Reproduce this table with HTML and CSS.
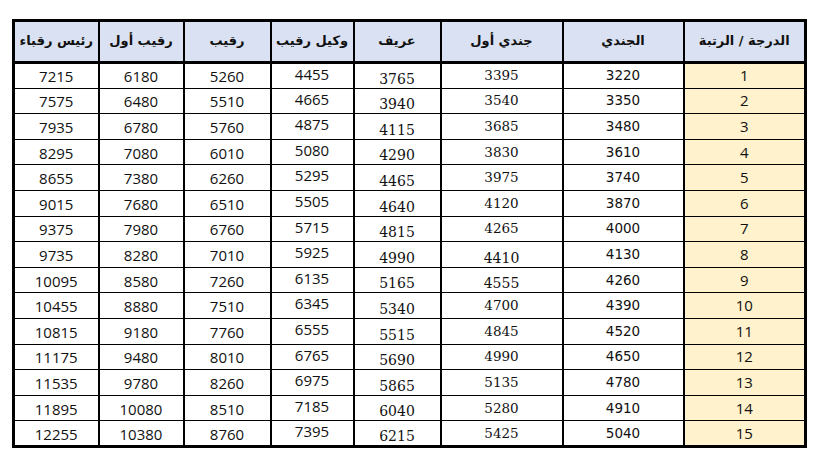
FILE: index.html
```html
<!DOCTYPE html>
<html lang="ar">
<head>
<meta charset="utf-8">
<link rel="stylesheet" href="styles.css">
</head>
<body>
<div class="page">
<table class="grid">
<colgroup>
<col class="c-wide"><col class="c-mid"><col class="c-wide2"><col class="c-n1"><col class="c-n2"><col class="c-n3"><col class="c-n4"><col class="c-n5">
</colgroup>
<thead>
<tr>
<th>الدرجة / الرتبة</th><th>الجندي</th><th>جندي أول</th><th>عريف</th><th>وكيل رقيب</th><th>رقيب</th><th>رقيب أول</th><th>رئيس رقباء</th>
</tr>
</thead>
<tbody>
<tr><td class="rank">1</td><td class="tah">3220</td><td class="a">3395</td><td class="low">3765</td><td class="high">4455</td><td class="b">5260</td><td class="b">6180</td><td class="b">7215</td></tr>
<tr><td class="rank">2</td><td class="tah">3350</td><td class="a">3540</td><td class="low">3940</td><td class="high">4665</td><td class="b">5510</td><td class="b">6480</td><td class="b">7575</td></tr>
<tr><td class="rank">3</td><td class="tah">3480</td><td class="a">3685</td><td class="low">4115</td><td class="high">4875</td><td class="b">5760</td><td class="b">6780</td><td class="b">7935</td></tr>
<tr><td class="rank">4</td><td class="tah">3610</td><td class="a">3830</td><td class="low">4290</td><td class="high">5080</td><td class="b">6010</td><td class="b">7080</td><td class="b">8295</td></tr>
<tr><td class="rank">5</td><td class="tah">3740</td><td class="a">3975</td><td class="low">4465</td><td class="high">5295</td><td class="b">6260</td><td class="b">7380</td><td class="b">8655</td></tr>
<tr><td class="rank">6</td><td class="tah">3870</td><td class="a">4120</td><td class="low">4640</td><td class="high">5505</td><td class="b">6510</td><td class="b">7680</td><td class="b">9015</td></tr>
<tr><td class="rank">7</td><td class="tah">4000</td><td class="a">4265</td><td class="low">4815</td><td class="high">5715</td><td class="b">6760</td><td class="b">7980</td><td class="b">9375</td></tr>
<tr><td class="rank">8</td><td class="tah">4130</td><td class="a low">4410</td><td class="low">4990</td><td class="high">5925</td><td class="b">7010</td><td class="b">8280</td><td class="b">9735</td></tr>
<tr><td class="rank">9</td><td class="tah">4260</td><td class="a low">4555</td><td class="low">5165</td><td class="high">6135</td><td class="b">7260</td><td class="b">8580</td><td class="b">10095</td></tr>
<tr><td class="rank">10</td><td class="tah">4390</td><td class="a">4700</td><td class="low">5340</td><td class="high">6345</td><td class="b">7510</td><td class="b">8880</td><td class="b">10455</td></tr>
<tr><td class="rank">11</td><td class="tah">4520</td><td class="a">4845</td><td class="low">5515</td><td class="high">6555</td><td class="b">7760</td><td class="b">9180</td><td class="b">10815</td></tr>
<tr><td class="rank">12</td><td class="tah">4650</td><td class="a">4990</td><td class="low">5690</td><td class="high">6765</td><td class="b">8010</td><td class="b">9480</td><td class="b">11175</td></tr>
<tr><td class="rank">13</td><td class="tah">4780</td><td class="a">5135</td><td class="low">5865</td><td class="high">6975</td><td class="b">8260</td><td class="b">9780</td><td class="b">11535</td></tr>
<tr><td class="rank">14</td><td class="tah">4910</td><td class="a">5280</td><td class="low">6040</td><td class="high">7185</td><td class="b">8510</td><td class="b">10080</td><td class="b">11895</td></tr>
<tr><td class="rank">15</td><td class="tah">5040</td><td class="a">5425</td><td class="low">6215</td><td class="high">7395</td><td class="b">8760</td><td class="b">10380</td><td class="b">12255</td></tr>
</tbody>
</table>
</div>
</body>
</html>
```
FILE: styles.css
```css
html, body {
  margin: 0;
  padding: 0;
  background: #ffffff;
}
.page {
  width: 820px;
  height: 458px;
  padding: 19px 0 0 12px;
  box-sizing: border-box;
}
.grid {
  direction: rtl;
  border-collapse: collapse;
  table-layout: fixed;
  width: 792px;
  border: 3px solid #000;
  color: #111;
  font-family: "Open Sans", "Liberation Sans", "DejaVu Sans", sans-serif;
}
.c-wide { width: 122px; }
.c-mid { width: 121px; }
.c-wide2 { width: 122px; }
.c-n1 { width: 87px; }
.c-n2 { width: 83px; }
.c-n3 { width: 87px; }
.c-n4 { width: 85px; }
.c-n5 { width: 85px; }
.grid th {
  height: 37px;
  background: #d9e1f2;
  border-left: 2px solid #000;
  border-right: 2px solid #000;
  border-bottom: 3px solid #000;
  font-family: "DejaVu Sans", sans-serif;
  font-weight: bold;
  font-size: 13px;
  color: #111;
  text-align: center;
  vertical-align: middle;
  padding: 0 0 2px;
}
.grid td {
  box-sizing: border-box;
  height: 25.6px;
  border-left: 2px solid #000;
  border-right: 2px solid #000;
  border-bottom: 1px solid #000;
  text-align: center;
  vertical-align: middle;
  font-size: 15px;
  padding: 0;
  line-height: 17px;
}
.grid td.rank {
  background: #fff2cc;
  font-size: 15px;
}
.grid td.tah {
  font-family: "DejaVu Sans", sans-serif;
  font-size: 13.5px;
}
.grid td.a {
  font-family: "DejaVu Serif", "Liberation Serif", serif;
  font-size: 13.5px;
}
.grid td.low {
  font-family: "DejaVu Serif", "Liberation Serif", serif;
  font-size: 14px;
  vertical-align: bottom;
  padding-bottom: 0;
}
.grid td.high {
  font-size: 15px;
  vertical-align: top;
  padding-top: 2px;
}
.grid td.b {
  font-size: 15px;
  padding-top: 2px;
}
```
